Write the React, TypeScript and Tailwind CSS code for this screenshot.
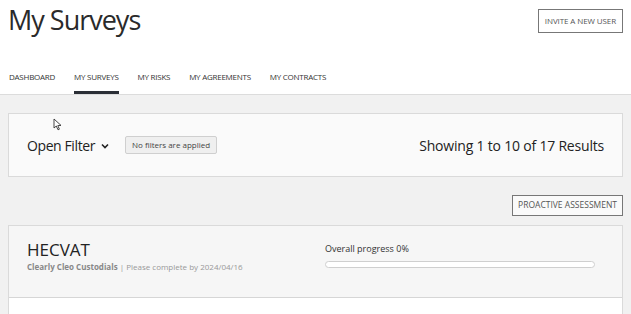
import React from "react";

const tabs = ["DASHBOARD", "MY SURVEYS", "MY RISKS", "MY AGREEMENTS", "MY CONTRACTS"];

const App = () => {
  return (
    <div className="w-[631px] h-[314px] overflow-hidden bg-[#f1f1f1] text-[#222] font-['Open_Sans',sans-serif]">
      <div className="bg-white border-b border-[#dcdcdc]">
        <div className="flex justify-between items-start pl-[8px] pr-[8px] pt-[2px]">
          <h1 className="text-[27px] leading-[36px] tracking-[-1px] text-[#2a2a2a] font-normal">My Surveys</h1>
          <button className="mt-[7px] h-[24px] px-[6px] border border-[#777] text-[8px] tracking-[-0.1px] text-[#555] bg-white">
            INVITE A NEW USER
          </button>
        </div>
        <div className="flex gap-[19px] pl-[9px] mt-[33px]">
          {tabs.map((t) => (
            <div
              key={t}
              className={
                "text-[8px] tracking-[-0.25px] text-[#333] pb-[8px] border-b-[3px] " +
                (t === "MY SURVEYS" ? "border-[#2b2f36]" : "border-transparent")
              }
            >
              {t}
            </div>
          ))}
        </div>
      </div>

      <div className="px-[8px] pt-[18px]">
        <div className="relative h-[64px] bg-[#fafafa] border border-[#dadada] flex items-center justify-between pl-[18px] pr-[18px]">
          <svg className="absolute left-[44px] top-[4px]" width="9" height="13" viewBox="0 0 9 13">
            <path d="M1 1 L1 10 L3.3 8 L5 11.8 L6.4 11.2 L4.8 7.6 L8 7.4 Z" fill="white" stroke="#333" strokeWidth="0.9" />
          </svg>
          <div className="flex items-center">
            <span className="text-[14px] tracking-[-0.4px] text-[#222]">Open Filter</span>
            <svg className="ml-[6px] mt-[2px]" width="8" height="6" viewBox="0 0 8 6">
              <path d="M1 1.5 L4 4.5 L7 1.5" fill="none" stroke="#222" strokeWidth="1.6" />
            </svg>
            <span className="ml-[16px] h-[18px] px-[6px] flex items-center bg-[#efefef] border border-[#cfcfcf] rounded-[2px] text-[8px] text-[#444]">
              No filters are applied
            </span>
          </div>
          <span className="text-[14px] text-[#222] tracking-[-0.2px]">Showing 1 to 10 of 17 Results</span>
        </div>

        <div className="flex justify-end mt-[18px]">
          <button className="h-[21px] px-[5px] border border-[#777] bg-[#fafafa] text-[8.5px] text-[#555] tracking-[0px]">
            PROACTIVE ASSESSMENT
          </button>
        </div>

        <div className="mt-[9px] border border-[#dadada] bg-white">
          <div className="h-[72px] bg-[#f6f6f6] border-b border-[#d6d6d6] flex pl-[18px] pt-[13px]">
            <div className="w-[298px]">
              <div className="text-[17px] leading-[22px] text-[#222]">HECVAT</div>
              <div className="text-[8px] text-[#999]">
                <span className="font-bold text-[#888]">Clearly Cleo Custodials</span> | Please complete by 2024/04/16
              </div>
            </div>
            <div className="pt-[3px]">
              <div className="text-[9px] text-[#333]">Overall progress 0%</div>
              <div className="mt-[5px] w-[270px] h-[7px] rounded-full border border-[#cfcfcf] bg-white" />
            </div>
          </div>
          <div className="h-[40px] bg-white" />
        </div>
      </div>
    </div>
  );
};

export default App;
